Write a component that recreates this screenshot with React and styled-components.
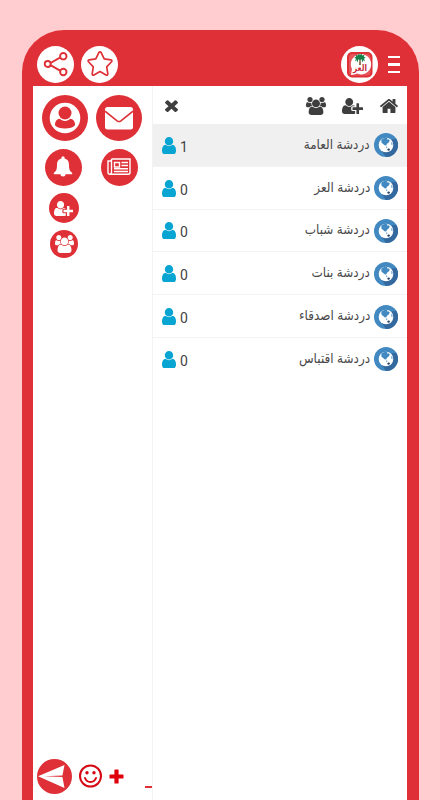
import React from 'react'
import styled, { createGlobalStyle } from 'styled-components'

const RED = '#de3036'

const GlobalStyle = createGlobalStyle`
  * {
    box-sizing: border-box;
  }
  body {
    margin: 0;
    overflow: hidden;
    background: #ffccd0;
    font-family: Roboto, "DejaVu Sans", sans-serif;
  }
`
const Page = styled.div`
  height: 800px;
  padding: 30px 21px 0 22px;
  overflow: hidden;
`
const Phone = styled.div`
  height: 812px;
  padding: 0 12px 0 11px;
  background: ${RED};
  border-radius: 42px;
`
const Header = styled.header`
  height: 56px;
  padding: 12px 7px 0 4px;
  display: flex;
  align-items: center;
`
const Round = styled.div`
  width: ${(props) => props.$size}px;
  height: ${(props) => props.$size}px;
  flex: none;
  display: flex;
  align-items: center;
  justify-content: center;
  border-radius: 50%;
  color: ${(props) => (props.$light ? RED : '#fff')};
  background: ${(props) => (props.$light ? '#fff' : RED)};
`
const HeaderGroup = styled.div`
  display: flex;
  align-items: center;
  gap: ${(props) => props.$gap}px;
  margin-left: ${(props) => (props.$end ? 'auto' : 0)};
`
const Menu = styled.div`
  width: 12px;
  display: grid;
  gap: 5px;
  padding-top: 1px;
`
const Line = styled.div`
  height: 2.4px;
  background: #fff;
`
const Content = styled.main`
  height: 714px;
  display: flex;
  background: #fff;
`
const Side = styled.aside`
  width: 120px;
  padding-top: 9px;
  display: flex;
  flex-direction: column;
  border-right: 1px solid #f3f3f3;
`
const Shortcuts = styled.div`
  display: grid;
  grid-template-columns: 46px 46px;
  grid-template-rows: 46px 38px 30px 27px;
  column-gap: 8px;
  row-gap: 7px;
  padding-left: 9px;
  justify-items: center;
  align-items: center;
`
const ShortcutCell = styled.div`
  grid-column: ${(props) => props.$col};
  padding-right: ${(props) => props.$shift || 0}px;
`
const Composer = styled.div`
  height: 48px;
  margin-top: auto;
  padding: 0 0 0 4px;
  display: flex;
  align-items: center;
`
const Smile = styled.div`
  display: flex;
  margin: 0 6px;
`
const Caret = styled.div`
  width: 7px;
  height: 2px;
  margin: 22px 0 0 auto;
  background: ${RED};
`
const Rooms = styled.section`
  flex: 1;
`
const Toolbar = styled.div`
  height: 38px;
  padding: 1px 9px 0 12px;
  display: flex;
  align-items: center;
  color: #3e3e3e;
`
const ToolbarIcons = styled.div`
  margin-left: auto;
  display: flex;
  align-items: center;
  gap: ${(props) => props.$gap || 16}px;
`
const Row = styled.div`
  height: 42.8px;
  padding: 1px 9px 0;
  display: flex;
  align-items: center;
  background: ${(props) => (props.$active ? '#f0f0f0' : '#fff')};
  border-bottom: 1px solid #f3f3f3;

  &:last-child {
    border-bottom-color: transparent;
  }
`
const Count = styled.div`
  display: flex;
  align-items: center;
  gap: 4px;
  color: #444;
  font-size: 14px;
  line-height: 16px;
`
const CountNumber = styled.span`
  padding-top: 3px;
`
const RoomName = styled.div`
  margin-left: auto;
  margin-right: 4px;
  padding-bottom: 1px;
  direction: rtl;
  color: #484848;
  font-family: "DejaVu Sans", sans-serif;
  font-size: 12.5px;
  line-height: 20px;
  word-spacing: -0.3px;
  white-space: nowrap;
  transform: scale(0.96, 1.08);
  transform-origin: right center;
`
const LogoText = styled.text`
  font-family: "DejaVu Sans", sans-serif;
  font-size: 9px;
  font-weight: bold;
`

// solid glyphs, drawn on a 1792 unit grid
const glyphs = {
  user: 'M1536 1399q0 109-62.5 187t-150.5 78h-854q-88 0-150.5-78t-62.5-187q0-85 8.5-160.5t31.5-152 58.5-131 94-89 134.5-34.5q131 128 313 128t313-128q76 0 134.5 34.5t94 89 58.5 131 31.5 152 8.5 160.5zm-256-887q0 159-112.5 271.5t-271.5 112.5-271.5-112.5-112.5-271.5 112.5-271.5 271.5-112.5 271.5 112.5 112.5 271.5z',
  close: 'M1490 1322q0 40-28 68l-136 136q-28 28-68 28t-68-28l-294-294-294 294q-28 28-68 28t-68-28l-136-136q-28-28-28-68t28-68l294-294-294-294q-28-28-28-68t28-68l136-136q28-28 68-28t68 28l294 294 294-294q28-28 68-28t68 28l136 136q28 28 28 68t-28 68l-294 294 294 294q28 28 28 68z',
  home: 'M1472 992v480q0 26-19 45t-45 19h-384v-384h-256v384h-384q-26 0-45-19t-19-45v-480q0-1 .5-3t.5-3l575-474 575 474q1 2 1 6zm223-69l-62 74q-8 9-21 11h-3q-13 0-21-7l-692-577-692 577q-12 8-24 7-13-2-21-11l-62-74q-8-10-7-23.5t11-21.5l719-599q32-26 76-26t76 26l244 204v-195q0-14 9-23t23-9h192q14 0 23 9t9 23v408l219 182q10 8 11 21.5t-7 23.5z',
  userPlus: 'M704 896q-159 0-271.5-112.5T320 512t112.5-271.5T704 128t271.5 112.5T1088 512 975.5 783.5 704 896zM1664 1024h352q13 0 22.5 9.5t9.5 22.5v192q0 13-9.5 22.5t-22.5 9.5h-352v352q0 13-9.5 22.5t-22.5 9.5h-192q-13 0-22.5-9.5t-9.5-22.5v-352h-352q-13 0-22.5-9.5t-9.5-22.5v-192q0-13 9.5-22.5t22.5-9.5h352V672q0-13 9.5-22.5t22.5-9.5h192q13 0 22.5 9.5t9.5 22.5zM896 1056v192q0 52 38 90t90 38h256v238q-68 50-171 50H267q-121 0-194-69T0 1405q0-53 3.5-103.5t14-109T45 1084t43-97.5 62-81 85.5-53.5T347 832q19 0 39 17 79 61 154.5 91.5T704 971t163.5-30.5T1022 849q20-17 39-17 132 0 217 96h-254q-52 0-90 38t-38 90z',
  group: 'M657 896q-162 5-265 128h-134q-82 0-138-40.5t-56-118.5q0-353 124-353 6 0 43.5 21t97.5 42.5 119 21.5q67 0 133-23-5 37-5 66 0 139 81 256zm1071 637q0 120-73 189.5t-194 69.5h-874q-121 0-194-69.5t-73-189.5q0-53 3.5-103.5t14-109 26.5-108.5 43-97.5 62-81 85.5-53.5 111.5-20q10 0 43 21.5t73 48 107 48 135 21.5 135-21.5 107-48 73-48 43-21.5q61 0 111.5 20t85.5 53.5 62 81 43 97.5 26.5 108.5 14 109 3.5 103.5zm-1024-1277q0 106-75 181t-181 75-181-75-75-181 75-181 181-75 181 75 75 181zm704 384q0 159-112.5 271.5t-271.5 112.5-271.5-112.5-112.5-271.5 112.5-271.5 271.5-112.5 271.5 112.5 112.5 271.5zm576 225q0 78-56 118.5t-138 40.5h-134q-103-123-265-128 81-117 81-256 0-29-5-66 66 23 133 23 59 0 119-21.5t97.5-42.5 43.5-21q124 0 124 353zm-128-609q0 106-75 181t-181 75-181-75-75-181 75-181 181-75 181 75 75 181z',
}

const Glyph = ({ name, width, height, box = '0 0 1792 1792' }) => (
  <svg width={width} height={height} viewBox={box} preserveAspectRatio="none" fill="currentColor">
    <path d={glyphs[name]} />
  </svg>
)

const ShareIcon = () => (
  <svg width="26" height="26" viewBox="0 0 26 26" fill="none" stroke="currentColor" strokeWidth="1.9">
    <path d="M7.5 12 17 6.6M7.5 14.2 17 19.6" />
    <circle cx="4.7" cy="13" r="3" />
    <circle cx="20.3" cy="5.2" r="3.2" />
    <circle cx="20.3" cy="21" r="3.2" />
  </svg>
)

const StarIcon = () => (
  <svg width="28" height="28" viewBox="0 0 28 28" fill="none" stroke="currentColor" strokeWidth="1.7" strokeLinejoin="round">
    <path d="M12.7 2.8Q14 .8 15.3 2.8L18.2 8.9 24.7 9.9Q26.8 10.3 25.3 12L20.7 16.8 21.8 23.6Q21.9 25.8 20 24.9L14 21.6 8 24.9Q6.1 25.8 6.2 23.6L7.3 16.8 2.7 12Q1.2 10.3 3.3 9.9L9.8 8.9Z" />
  </svg>
)

const Logo = () => (
  <svg width="37" height="37" viewBox="0 0 37 37">
    <rect x="6" y="6" width="25.5" height="25.5" rx="5" fill={RED} />
    <rect x="8" y="8" width="21.5" height="21.5" rx="3.5" fill="#e5555a" />
    <path d="M10 29 11 23A10.2 10.2 0 1 1 16 27.6Q13 29 10 29Z" fill="#fff" />
    <path d="M18 19 18.4 13H19.6L20 19Z" fill="#8a6a42" />
    <path d="M19 14.5 17.5 13 16.5 16.5 15.5 14 14 15.5 15 12.5 13.3 11.8 15.2 10.5 14.5 8.8 17 9.5 17.5 7.5 19 9 20.5 7.5 21.2 9.5 23.6 8.8 22.8 10.5 24.7 11.8 23 12.5 24 15.5 22.5 14 21.5 16.5 20.5 13Z" fill="#16804a" />
    <LogoText x="19" y="24.5" textAnchor="middle" fill="#c62a3b" textLength="14" lengthAdjust="spacingAndGlyphs">العز</LogoText>
  </svg>
)

const ProfileIcon = () => (
  <svg width="32" height="32" viewBox="0 0 32 32">
    <circle cx="16" cy="16" r="15.3" fill="#fff" />
    <circle cx="16" cy="11" r="6.5" fill={RED} />
    <path d="M6 23.3Q6 17.3 11 16.6Q16 20.5 21 16.6Q26 17.3 26 23.3Q23 26.6 16 26.6T6 23.3Z" fill={RED} />
    <path d="M9.8 15.6Q16 21.500 22.200 15.600" fill="none" stroke="#fff" strokeWidth="1" />
  </svg>
)

const MailIcon = () => (
  <svg width="28" height="23" viewBox="0 0 28 23">
    <rect width="28" height="22.5" rx="2.5" fill="#fff" />
    <path d="M0 4.2 12.1 13.8Q14 15.2 15.9 13.8L28 4.2" fill="none" stroke={RED} strokeWidth="1.6" />
  </svg>
)

const BellIcon = () => (
  <svg width="20" height="22" viewBox="0 0 20 22" fill="currentColor">
    <path d="M8.4 2.5V1.8a1.6 1.6 0 0 1 3.2 0v.7C15 3.3 16 6 16 9c0 5 1 6 3.2 8q.5 1.2-.7 1.2h-17Q.3 18.2.8 17C3 15 4 14 4 9c0-3 1-5.7 4.4-6.5Z" />
    <path d="M7.5 18h5a2.5 2.500 0 0 1-5 0Z" />
  </svg>
)

const NewsIcon = () => (
  <svg width="24" height="18" viewBox="0 0 24 18" fill="none" stroke="currentColor" strokeWidth="1.4">
    <path d="M4.5 1H23v13.5q0 1.8-1.8 1.8H2.8Q1 16.3 1 14.5V3h3.5v11.5q0 1.5-1.5 1.5M4.5 1v3" />
    <path d="M7.500 4.500h5v4.500h-5zM14.5 4.500h6.5M14.5 7.500h6.5M7 10.800h14M7 13.500h14" />
  </svg>
)

const SendIcon = () => (
  <svg width="35" height="35" viewBox="0 0 35 35">
    <path d="M1 17.2 27.5 6 25.3 17.2 27.5 29Z" fill="#fff" />
    <path d="M7 17.2 25.8 16.6V18Z" fill={RED} />
  </svg>
)

const SmileIcon = () => (
  <svg width="25" height="25" viewBox="0 0 25 25" fill="none" stroke="#d50813" strokeWidth="2">
    <circle cx="12.5" cy="12" r="10.5" />
    <path d="M7 14Q8.5 18 12.5 18T18 14" strokeLinecap="round" />
    <circle cx="9" cy="8.7" r="1.7" fill="#d50813" stroke="none" />
    <circle cx="16" cy="8.7" r="1.7" fill="#d50813" stroke="none" />
  </svg>
)

const PlusIcon = () => (
  <svg width="15" height="15" viewBox="0 0 15 15">
    <path d="M6 .5h3q.6 0 .6.6v4.3H14q.5 0 .5.5v3.200q0 .5-.5.5H9.600V14q0 .5-.6.5H6q-.6 0-.6-.5V9.600H1q-.5 0-.5-.5V5.900q0-.5.5-.5h4.400V1.100q0-.6.6-.6Z" fill="#e0000b" />
  </svg>
)

const Globe = () => (
  <svg width="24" height="24" viewBox="0 0 24 24">
    <circle cx="12" cy="12" r="12" fill="#4189c0" />
    <path d="M17 6.5 22.4 6A12 12 0 0 1 12 24L7.5 17.5Z" fill="#33699f" />
    <circle cx="12" cy="12" r="7.3" fill="#fff" />
    <path d="M7.3 6.8Q10 4.2 13.5 4.9L12.8 6.5 14.2 6.2 15.8 7.3 15 9.3 13 10.8 12.2 12.5 10.5 12.3 9.5 11.2 7.5 9.8Z" fill="#4189c0" />
    <path d="M11.8 13.2 13.5 14 12.7 15.3Z" fill="#4b8fc3" />
    <path d="M17 8.8 18.5 10V12.5L17.3 11.3Z" fill="#7aaed4" />
    <circle cx="14.6" cy="16.6" r="1.2" fill="#203e61" />
  </svg>
)

const rooms = [
  { id: 1, name: 'دردشة العامة', count: 1 },
  { id: 2, name: 'دردشة العز', count: 0 },
  { id: 3, name: 'دردشة شباب', count: 0 },
  { id: 4, name: 'دردشة بنات', count: 0 },
  { id: 5, name: 'دردشة اصدقاء', count: 0 },
  { id: 6, name: 'دردشة اقتباس', count: 0 },
]

const RoomRow = (props) => {
  const { name, count } = props.room

  return (
    <Row $active={props.active}>
      <Count>
        <svg width="14" height="17" viewBox="256 128 1280 1536" preserveAspectRatio="none" fill="#08a4d2">
          <path d={glyphs.user} />
        </svg>
        <CountNumber>{count}</CountNumber>
      </Count>
      <RoomName>{name}</RoomName>
      <Globe />
    </Row>
  )
}

const App = () => {
  return (
    <Page>
      <GlobalStyle />
      <Phone>
        <Header>
          <HeaderGroup $gap={7}>
            <Round $size={37} $light><ShareIcon /></Round>
            <Round $size={37} $light><StarIcon /></Round>
          </HeaderGroup>
          <HeaderGroup $gap={10} $end>
            <Round $size={37} $light><Logo /></Round>
            <Menu><Line /><Line /><Line /></Menu>
          </HeaderGroup>
        </Header>
        <Content>
          <Side>
            <Shortcuts>
              <ShortcutCell $col={1}><Round $size={46}><ProfileIcon /></Round></ShortcutCell>
              <ShortcutCell $col={2}><Round $size={46}><MailIcon /></Round></ShortcutCell>
              <ShortcutCell $col={1} $shift={4}><Round $size={37}><BellIcon /></Round></ShortcutCell>
              <ShortcutCell $col={2}><Round $size={37}><NewsIcon /></Round></ShortcutCell>
              <ShortcutCell $col={1} $shift={3}>
                <Round $size={30}><Glyph name="userPlus" width={19} height={15} box="0 128 2048 1536" /></Round>
              </ShortcutCell>
              <ShortcutCell $col={1} $shift={2}>
                <Round $size={28}><Glyph name="group" width={19} height={18} box="64 0 1920 1792" /></Round>
              </ShortcutCell>
            </Shortcuts>
            <Composer>
              <Round $size={35}><SendIcon /></Round>
              <Smile><SmileIcon /></Smile>
              <PlusIcon />
              <Caret />
            </Composer>
          </Side>
          <Rooms>
            <Toolbar>
              <Glyph name="close" width={13} height={13} box="302 238 1188 1316" />
              <ToolbarIcons $gap={17}>
                <ToolbarIcons>
                  <Glyph name="group" width={20} height={18} box="64 0 1920 1792" />
                  <Glyph name="userPlus" width={21} height={16} box="0 128 2048 1536" />
                </ToolbarIcons>
                <Glyph name="home" width={18} height={14} box="90 256 1612 1280" />
              </ToolbarIcons>
            </Toolbar>
            {rooms.map((room, index) => (
              <RoomRow key={room.id} room={room} active={index === 0} />
            ))}
          </Rooms>
        </Content>
      </Phone>
    </Page>
  )
}

export default App
